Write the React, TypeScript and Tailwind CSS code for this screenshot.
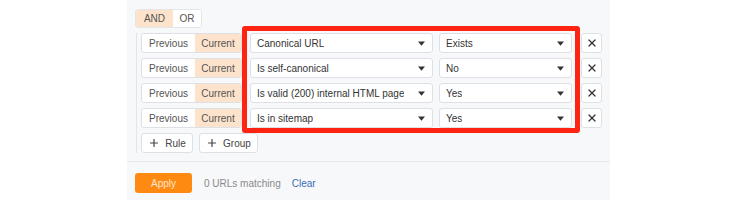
import { Plus, X } from "lucide-react"

const rules = [
  { field: "Canonical URL", value: "Exists" },
  { field: "Is self-canonical", value: "No" },
  { field: "Is valid (200) internal HTML page", value: "Yes" },
  { field: "Is in sitemap", value: "Yes" },
]

function Caret() {
  return (
    <svg width="7" height="5" viewBox="0 0 7 5" className="shrink-0">
      <path d="M0 0.5h7L3.5 4.8z" fill="#333" />
    </svg>
  )
}

function Select({ label, width }: { label: string; width: string }) {
  return (
    <div
      className={`flex h-5 items-center justify-between rounded-[3px] border border-[#dde0e5] bg-white pl-[6px] pr-[7px] text-[#333] ${width}`}
    >
      <span className="truncate">{label}</span>
      <Caret />
    </div>
  )
}

function RuleRow({ field, value }: { field: string; value: string }) {
  return (
    <div className="flex h-5 items-center">
      <div className="flex h-5 w-[101px] overflow-hidden rounded-[3px] border border-[#dde0e5] text-[#555]">
        <span className="flex w-[53px] items-center justify-center bg-white">Previous</span>
        <span className="flex flex-1 items-center justify-center bg-[#fde3cb]">Current</span>
      </div>
      <div className="ml-2">
        <Select label={field} width="w-[183px]" />
      </div>
      <div className="ml-[6px]">
        <Select label={value} width="w-[133px]" />
      </div>
      <button
        type="button"
        className="ml-[9px] flex h-5 w-[21px] items-center justify-center rounded-[3px] border border-[#dde0e5] bg-white text-[#333]"
      >
        <X className="h-3 w-3" strokeWidth={2.4} />
      </button>
    </div>
  )
}

export default function App() {
  return (
    <div
      className="h-[200px] w-[750px] bg-white text-[10px]"
      style={{ fontFamily: '"Liberation Sans", Arial, sans-serif' }}
    >
      <div className="relative ml-[127px] flex h-[200px] w-[483px] flex-col bg-[#f7f8fa]">
        <div className="px-2 pt-[9px]">
          <div className="flex h-[19px] w-fit overflow-hidden rounded-[3px] border border-[#e3e5e9] text-[#555]">
            <span className="flex w-[37px] items-center justify-center bg-[#fde3cb]">AND</span>
            <span className="flex w-[28px] items-center justify-center bg-white">OR</span>
          </div>

          <div className="ml-px mt-[5px] border-l border-[#e3e5e9] pl-[4px]">
            <div className="flex flex-col gap-[5px]">
              {rules.map((r) => (
                <RuleRow key={r.field} field={r.field} value={r.value} />
              ))}
              <div className="flex gap-[6px]">
                <button
                  type="button"
                  className="flex h-5 w-[52px] items-center justify-center gap-[5px] rounded-[3px] border border-[#dde0e5] bg-white text-[#444]"
                >
                  <Plus className="h-3 w-3" strokeWidth={2.4} />
                  Rule
                </button>
                <button
                  type="button"
                  className="flex h-5 w-[59px] items-center justify-center gap-[5px] rounded-[3px] border border-[#dde0e5] bg-white text-[#444]"
                >
                  <Plus className="h-3 w-3" strokeWidth={2.4} />
                  Group
                </button>
              </div>
            </div>
          </div>
        </div>

        <div className="mt-2 border-t border-[#e6e8ec]" />

        <div className="mt-[11px] flex items-center px-2">
          <button
            type="button"
            className="flex h-5 w-[57px] items-center justify-center rounded-[3px] bg-[#ff8a12] text-[#ffe6cc]"
          >
            Apply
          </button>
          <span className="ml-3 text-[#8a8a8a]">0 URLs matching</span>
          <span className="ml-[11px] text-[#3b6db3]">Clear</span>
        </div>

        {/* annotation box */}
        <div className="pointer-events-none absolute left-[115px] top-[26px] h-[107px] w-[338px] rounded-[3px] border-[5px] border-[#ff2411]" />
      </div>
    </div>
  )
}
